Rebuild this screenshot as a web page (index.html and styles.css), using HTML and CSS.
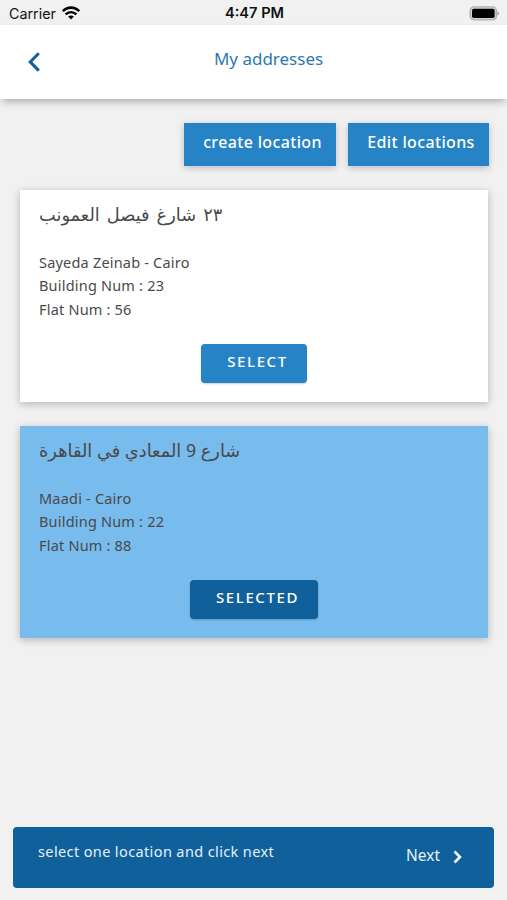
FILE: index.html
```html
<!DOCTYPE html>
<html lang="en">
<head>
    <meta charset="UTF-8">
    <meta name="viewport" content="width=device-width, initial-scale=1.0">
    <title>My addresses</title>
    <link rel="stylesheet" href="styles.css">
</head>
<body>
    <div class="status-bar">
        <div class="carrier">
            <span>Carrier</span>
            <svg width="18" height="14" viewBox="0 0 18 14">
                <path d="M0.8 5.2C5.4 0.4 12.6 0.4 17.2 5.2" fill="none" stroke="#000" stroke-width="2.6"/>
                <path d="M3.6 8.4C6.8 5.4 11.2 5.4 14.4 8.4" fill="none" stroke="#000" stroke-width="2.5"/>
                <path d="M6.1 10.6C7.8 9 10.2 9 11.9 10.6L9 13.5Z"/>
            </svg>
        </div>
        <span class="time">4:47 PM</span>
        <svg class="battery" width="31" height="15" viewBox="0 0 31 15">
            <rect x="1.2" y="0.9" width="26.2" height="13" rx="4" fill="#d0d0d0" stroke="#b0b0b0" stroke-width="1.4"/>
            <rect x="3" y="2.7" width="22.6" height="9.4" rx="1.8"/>
            <path d="M28.3 5.2C30.8 6 30.8 8.8 28.3 9.6Z" fill="#aaa"/>
        </svg>
    </div>
    <header class="header">
        <svg class="back" width="12" height="20" viewBox="0 0 12 20">
            <path d="M10.8 1.2L2.2 9.9L10.8 18.6" fill="none" stroke="#10609c" stroke-width="3"/>
        </svg>
        <h1>My addresses</h1>
    </header>
    <main class="content">
        <div class="actions">
            <button class="action create">create location</button>
            <button class="action edit">Edit locations</button>
        </div>
        <section class="card">
            <h2 class="long" dir="rtl" lang="ar">٢٣ شارغ فيصل العمونب</h2>
            <p>Sayeda Zeinab - Cairo</p>
            <p>Building Num : 23</p>
            <p>Flat Num : 56</p>
            <button class="select">SELECT</button>
        </section>
        <section class="card active">
            <h2 dir="rtl" lang="ar">شارع 9 المعادي في القاهرة</h2>
            <p>Maadi - Cairo</p>
            <p>Building Num : 22</p>
            <p>Flat Num : 88</p>
            <button class="select">SELECTED</button>
        </section>
    </main>
    <footer class="next-bar">
        <span class="hint">select one location and click next</span>
        <a class="next">Next
            <svg width="9" height="14" viewBox="0 0 9 14">
                <path d="M1.5 1.5L7 7L1.5 12.5" fill="none" stroke="#fff" stroke-width="2.5"/>
            </svg>
        </a>
    </footer>
</body>
</html>
```

FILE: styles.css
```css
* {
    box-sizing: border-box;
}
body {
    margin: 0;
    height: 900px;
    display: flex;
    flex-direction: column;
    background: #f1f1f1;
    color: #4a4a4a;
    font-family: "Noto Sans", "DejaVu Sans", sans-serif;
    overflow: hidden;
}
h1, h2, p {
    margin: 0;
    font-weight: 400;
}
button {
    border: none;
    font-family: inherit;
    color: #fff;
    background: #2683c5;
    white-space: nowrap;
}

/* Status bar */
.status-bar {
    height: 25px;
    padding: 1px 7px 0 9px;
    display: grid;
    grid-template-columns: 1fr auto 1fr;
    align-items: center;
    font-family: Inter, "Liberation Sans", sans-serif;
    font-size: 14.3px;
    color: #111;
}
.carrier {
    display: flex;
    align-items: center;
    gap: 6px;
}
.time {
    font-weight: 600;
    font-size: 14.6px;
}
.battery {
    justify-self: end;
}

/* Header */
.header {
    height: 74px;
    display: grid;
    grid-template-columns: 28px 1fr 28px;
    align-items: center;
    background: #fff;
    box-shadow: 0 4px 8px -2px rgba(0, 0, 0, 0.32);
}
.back {
    margin-left: 28px;
}
.header h1 {
    padding: 0 0 7px 30px;
    text-align: center;
    font-size: 17px;
    color: #2d77b2;
}

/* Address list */
.content {
    flex: 1;
    padding: 24px 18px 0 20px;
}
.actions {
    display: flex;
    justify-content: flex-end;
    gap: 12px;
}
.action {
    height: 43px;
    padding: 0 0 6px 5px;
    font-size: 16px;
    font-weight: 500;
    letter-spacing: 0.35px;
    box-shadow: 0 2px 7px rgba(0, 0, 0, 0.22);
}
.create {
    width: 152px;
}
.edit {
    width: 141px;
}
.card {
    display: flex;
    flex-direction: column;
    width: 468px;
    height: 212px;
    margin-top: 24px;
    padding: 9px 19px 0;
    background: #fff;
    box-shadow: 0 2px 8px rgba(0, 0, 0, 0.25);
}
.card.active {
    background: #78bbed;
}
.card h2 {
    height: 52px;
    line-height: 30px;
    font-size: 17.8px;
    text-align: left;
}
.card h2.long {
    word-spacing: 2.4px;
}
.card p {
    height: 23.3px;
    line-height: 23px;
    font-size: 14.5px;
    letter-spacing: 0.2px;
}
.select {
    align-self: center;
    width: 106px;
    height: 39px;
    margin-top: 23px;
    padding: 0 0 4px 7px;
    border-radius: 4px;
    font-size: 15px;
    font-weight: 500;
    letter-spacing: 1.6px;
    box-shadow: 0 1px 2px rgba(0, 0, 0, 0.2);
}
.active .select {
    width: 128px;
    background: #10609c;
}

/* Bottom bar */
.next-bar {
    display: flex;
    justify-content: space-between;
    height: 61px;
    margin: 0 13px 12px;
    padding: 14px 32px 0 25px;
    border-radius: 4px;
    background: #10609c;
    color: #e4f1fb;
    font-size: 14.5px;
}
.hint {
    line-height: 21px;
    letter-spacing: 0.38px;
}
.next {
    display: flex;
    align-items: center;
    gap: 13px;
    height: 27px;
    font-size: 15.5px;
}
.next svg {
    margin-top: 4px;
}
```
